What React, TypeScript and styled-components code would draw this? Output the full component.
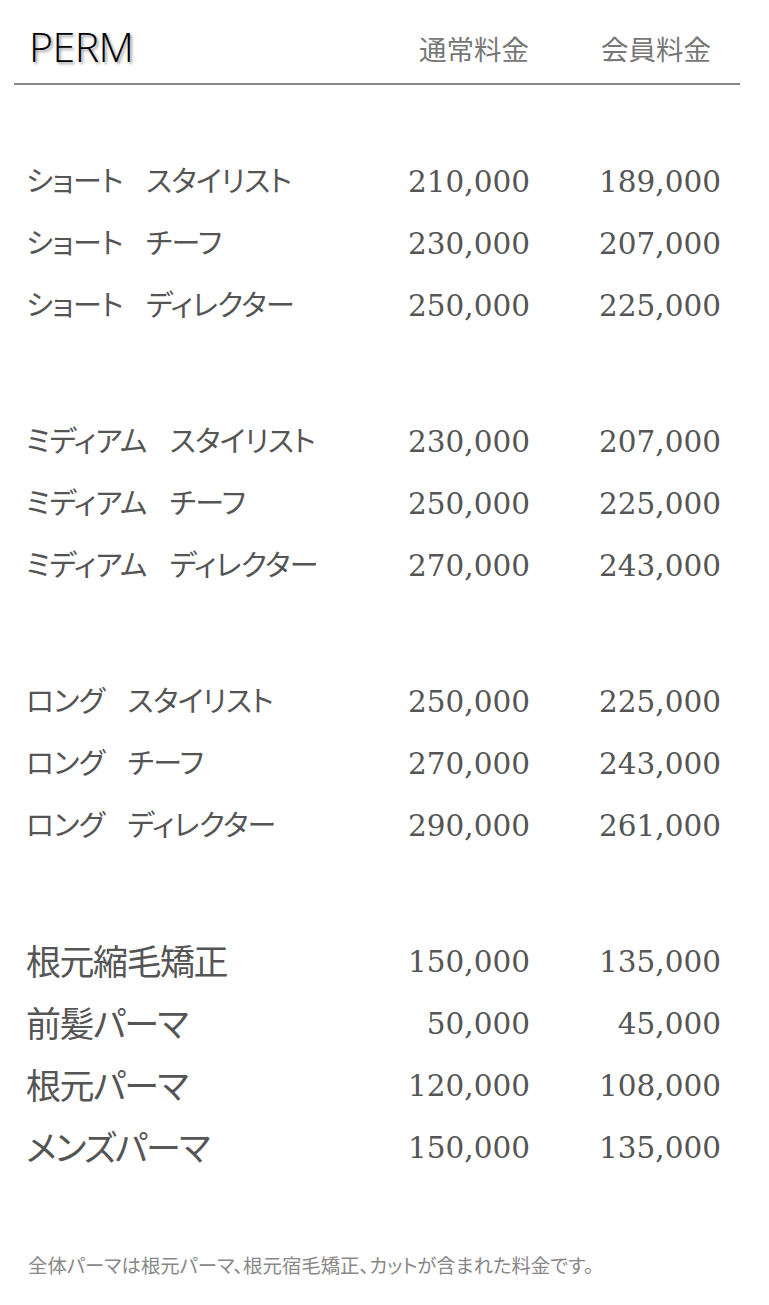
import React from 'react';
import styled, { createGlobalStyle } from 'styled-components';

const GlobalStyle = createGlobalStyle`
  body {
    margin: 0;
    background: #fff;
    font-family: "Noto Sans CJK JP", "Noto Sans", sans-serif;
  }
`

const Page = styled.div`
  width: 769px;
  padding-top: 21px;
  padding-bottom: 30px;
`

const Header = styled.div`
  margin: 0 29px 0 14px;
  display: grid;
  grid-template-columns: 1fr auto auto;
  column-gap: 72px;
  align-items: center;
  padding: 0 29px 12px 15px;
  border-bottom: 2px solid #888;
`

const Title = styled.h1`
  margin: 0;
  font-family: "Open Sans", sans-serif;
  font-weight: 300;
  font-size: 41px;
  line-height: 46px;
  letter-spacing: -0.5px;
  color: #000;
  text-shadow: 2px 2px 3px #999;
`

const ColHead = styled.span`
  font-size: 27.5px;
  line-height: 46px;
  color: #777;
  padding-top: 4px;
`

const Table = styled.div`
  display: flex;
  flex-direction: column;
  gap: 74px;
  padding-top: 66px;
`

const Group = styled.div`
  display: flex;
  flex-direction: column;
`

const Row = styled.div`
  display: grid;
  grid-template-columns: 1fr 160px 191px;
  align-items: center;
  height: 62px;
  padding: 0 48px 0 26px;
  color: #555;
`

const Label = styled.span<{ $big?: boolean }>`
  display: flex;
  gap: 23px;
  padding-bottom: 6px;
  font-size: ${({ $big }) => ($big ? '35px' : '29px')};
  letter-spacing: ${({ $big }) => ($big ? '-1.5px' : '-0.6px')};
  font-feature-settings: "palt";
  white-space: nowrap;
  line-height: 1;
`

const Price = styled.span`
  text-align: right;
  font-family: "DejaVu Serif", serif;
  font-size: 29.5px;
  line-height: 1;
  padding-top: 2px;
`

const Note = styled.p`
  margin: 72px 0 0 28px;
  font-size: 19.4px;
  line-height: 28px;
  color: #888;
  font-feature-settings: "palt";
`

type Item = [string, string | null, string, string]

const groups: { big?: boolean; items: Item[] }[] = [
  {
    items: [
      ['ショート', 'スタイリスト', '210,000', '189,000'],
      ['ショート', 'チーフ', '230,000', '207,000'],
      ['ショート', 'ディレクター', '250,000', '225,000'],
    ],
  },
  {
    items: [
      ['ミディアム', 'スタイリスト', '230,000', '207,000'],
      ['ミディアム', 'チーフ', '250,000', '225,000'],
      ['ミディアム', 'ディレクター', '270,000', '243,000'],
    ],
  },
  {
    items: [
      ['ロング', 'スタイリスト', '250,000', '225,000'],
      ['ロング', 'チーフ', '270,000', '243,000'],
      ['ロング', 'ディレクター', '290,000', '261,000'],
    ],
  },
  {
    big: true,
    items: [
      ['根元縮毛矯正', null, '150,000', '135,000'],
      ['前髪パーマ', null, '50,000', '45,000'],
      ['根元パーマ', null, '120,000', '108,000'],
      ['メンズパーマ', null, '150,000', '135,000'],
    ],
  },
]

const App: React.FC = () => {
  return (
    <Page>
      <GlobalStyle />
      <Header>
        <Title>PERM</Title>
        <ColHead>通常料金</ColHead>
        <ColHead>会員料金</ColHead>
      </Header>
      <Table>
        {groups.map((g, gi) => (
          <Group key={gi}>
            {g.items.map(([length, rank, normal, member]) => (
              <Row key={length + (rank ?? '')}>
                <Label $big={g.big}>
                  <span>{length}</span>
                  {rank && <span>{rank}</span>}
                </Label>
                <Price>{normal}</Price>
                <Price>{member}</Price>
              </Row>
            ))}
          </Group>
        ))}
      </Table>
      <Note>全体パーマは根元パーマ、根元宿毛矯正、カットが含まれた料金です。</Note>
    </Page>
  );
}

export default App;
